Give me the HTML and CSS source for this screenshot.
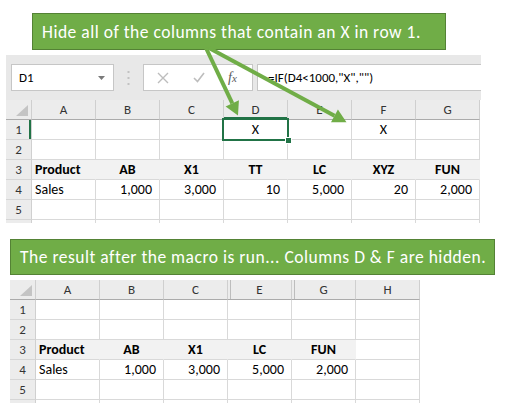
FILE: index.html
```html
<!DOCTYPE html>
<html>
<head>
<meta charset="utf-8">
<link rel="stylesheet" href="styles.css">
</head>
<body>
<div class="page">
  <div class="callout callout-top">Hide all of the columns that contain an X in row 1.</div>

  <div class="sheet sheet-top">
    <div class="fbar">
      <div class="namebox">
        <span>D1</span>
        <svg class="caret" width="7" height="4" viewBox="0 0 7 4"><polygon points="0,0 7,0 3.5,4" fill="#7a7a7a"/></svg>
      </div>
      <div class="grip">
        <svg width="3" height="14" viewBox="0 0 3 14"><rect x="0.5" y="0" width="2" height="2" fill="#c2c2c2"/><rect x="0.5" y="6" width="2" height="2" fill="#c2c2c2"/><rect x="0.5" y="12" width="2" height="2" fill="#c2c2c2"/></svg>
      </div>
      <div class="fxbox">
        <svg class="ico" width="12" height="12" viewBox="0 0 12 12"><path d="M1 1 L11 11 M11 1 L1 11" stroke="#bdbdbd" stroke-width="1.4" fill="none"/></svg>
        <svg class="ico" width="12" height="11" viewBox="0 0 12 11"><path d="M1 6 L4.5 9.5 L11 1" stroke="#bdbdbd" stroke-width="1.6" fill="none"/></svg>
        <span class="fx">f<span class="fxx">x</span></span>
      </div>
      <div class="formula">=IF(D4&lt;1000,"X","")</div>
    </div>

    <div class="grid grid-top">
      <div class="hd corner"><svg width="12" height="11" viewBox="0 0 12 11"><polygon points="12,0 12,11 0,11" fill="#c4c4c4"/></svg></div>
      <div class="hd">A</div><div class="hd">B</div><div class="hd">C</div><div class="hd hd-sel">D</div><div class="hd">E</div><div class="hd">F</div><div class="hd">G</div>

      <div class="rh rh-sel">1</div>
      <div class="c"></div><div class="c"></div><div class="c"></div>
      <div class="c ctr active">X<div class="sel"><div class="handle"></div></div></div>
      <div class="c"></div><div class="c ctr">X</div><div class="c"></div>

      <div class="rh">2</div>
      <div class="c"></div><div class="c"></div><div class="c"></div><div class="c"></div><div class="c"></div><div class="c"></div><div class="c"></div>

      <div class="rh">3</div>
      <div class="c f bold">Product</div><div class="c f bold ctr">AB</div><div class="c f bold ctr">X1</div><div class="c f bold ctr">TT</div><div class="c f bold ctr">LC</div><div class="c f bold ctr">XYZ</div><div class="c f bold ctr">FUN</div>

      <div class="rh">4</div>
      <div class="c">Sales</div><div class="c r">1,000</div><div class="c r">3,000</div><div class="c r">10</div><div class="c r">5,000</div><div class="c r">20</div><div class="c r">2,000</div>

      <div class="rh">5</div>
      <div class="c"></div><div class="c"></div><div class="c"></div><div class="c"></div><div class="c"></div><div class="c"></div><div class="c"></div>

      <div class="rh part"></div>
      <div class="c part"></div><div class="c part"></div><div class="c part"></div><div class="c part"></div><div class="c part"></div><div class="c part"></div><div class="c part"></div>
    </div>
  </div>

  <div class="callout callout-bottom">The result after the macro is run... Columns D &amp; F are hidden.</div>

  <div class="sheet sheet-bottom">
    <div class="grid grid-bottom">
      <div class="hd corner"><svg width="12" height="11" viewBox="0 0 12 11"><polygon points="12,0 12,11 0,11" fill="#c4c4c4"/></svg></div>
      <div class="hd">A</div><div class="hd">B</div><div class="hd">C</div><div class="hd hidden-left">E</div><div class="hd hidden-left">G</div><div class="hd">H</div>

      <div class="rh">1</div>
      <div class="c"></div><div class="c"></div><div class="c"></div><div class="c"></div><div class="c"></div><div class="c"></div>

      <div class="rh">2</div>
      <div class="c"></div><div class="c"></div><div class="c"></div><div class="c"></div><div class="c"></div><div class="c"></div>

      <div class="rh">3</div>
      <div class="c f bold">Product</div><div class="c f bold ctr">AB</div><div class="c f bold ctr">X1</div><div class="c f bold ctr">LC</div><div class="c f bold ctr">FUN</div><div class="c"></div>

      <div class="rh">4</div>
      <div class="c">Sales</div><div class="c r">1,000</div><div class="c r">3,000</div><div class="c r">5,000</div><div class="c r">2,000</div><div class="c"></div>

      <div class="rh">5</div>
      <div class="c"></div><div class="c"></div><div class="c"></div><div class="c"></div><div class="c"></div><div class="c"></div>

      <div class="rh part"></div>
      <div class="c part"></div><div class="c part"></div><div class="c part"></div><div class="c part"></div><div class="c part"></div><div class="c part"></div>
    </div>
  </div>

  <svg class="arrows" width="505" height="408" viewBox="0 0 505 408">
    <g fill="#70ad47" stroke="none">
      <line x1="206" y1="48" x2="232.3" y2="103.3" stroke="#70ad47" stroke-width="4"/>
      <polygon points="225.6,106.4 238.9,100.2 238,115.5"/>
      <line x1="209" y1="48" x2="334.5" y2="115.8" stroke="#70ad47" stroke-width="4"/>
      <polygon points="331,122.2 337.9,109.5 346.5,122.3"/>
    </g>
  </svg>
</div>
</body>
</html>
```

FILE: styles.css
```css
* { box-sizing: border-box; }

html, body {
  margin: 0;
  padding: 0;
  background: #ffffff;
}

body {
  width: 505px;
  height: 408px;
  overflow: hidden;
  font-family: Carlito, Calibri, Lato, "Liberation Sans", sans-serif;
  color: #000;
}

.page {
  position: relative;
  width: 505px;
  height: 408px;
  padding-top: 13px;
}

/* green callouts */
.callout {
  background: #70ad47;
  border: 1px solid #548235;
  color: #ffffff;
  font-size: 17.5px;
  letter-spacing: 0.5px;
  display: flex;
  align-items: center;
  padding-left: 9px;
  white-space: nowrap;
}

.callout-top {
  margin-left: 32px;
  width: 414px;
  height: 37px;
}

.callout-bottom {
  margin-left: 10px;
  margin-top: 16px;
  width: 485px;
  height: 36px;
}

/* sheets */
.sheet-top {
  margin-top: 5px;
  margin-left: 6px;
  width: 475px;
}

.sheet-bottom {
  margin-top: 5px;
  margin-left: 10px;
  width: 410px;
}

/* formula bar */
.fbar {
  height: 45px;
  background: #e8e8e8;
  display: flex;
  align-items: flex-start;
  padding: 9px 0 0 5px;
}

.namebox {
  width: 103px;
  height: 27px;
  background: #fff;
  border: 1px solid #c6c6c6;
  display: flex;
  align-items: center;
  justify-content: space-between;
  padding: 0 8px 0 7px;
  font-size: 13px;
}

.grip {
  width: 29px;
  height: 27px;
  display: flex;
  align-items: center;
  justify-content: center;
  padding-right: 1px;
}

.fxbox {
  width: 110px;
  height: 27px;
  background: #fff;
  border: 1px solid #c6c6c6;
  display: flex;
  align-items: center;
  padding-left: 13px;
  gap: 24px;
}

.fx {
  font-family: "Liberation Serif", "DejaVu Serif", serif;
  font-style: italic;
  font-size: 14px;
  color: #5a5a5a;
  margin-left: -1px;
}

.fxx {
  font-size: 11px;
}

.formula {
  flex: 1;
  height: 27px;
  margin-left: 4px;
  background: #fff;
  border: 1px solid #c6c6c6;
  border-right: none;
  font-size: 13px;
  line-height: 25px;
  padding-left: 10px;
  white-space: nowrap;
}

/* grids */
.grid {
  display: grid;
}

.grid-top {
  grid-template-columns: 26px repeat(7, 64px);
  grid-template-rows: 20px repeat(5, 20px) 3px;
}

.grid-bottom {
  grid-template-columns: 26px repeat(6, 64px);
  grid-template-rows: 20px repeat(5, 20px) 3px;
}

.hd {
  background: #ececec;
  border-right: 1px solid #cfcfcf;
  border-bottom: 1px solid #ababab;
  color: #333;
  font-size: 13px;
  line-height: 19px;
  text-align: center;
}

.corner {
  display: flex;
  align-items: flex-end;
  justify-content: flex-end;
  padding: 0 3px 3px 0;
}

.hd-sel {
  box-shadow: inset 0 -2px 0 #217346;
}

.hidden-left {
  box-shadow: inset 2px 0 0 #ececec, inset 3px 0 0 #bdbdbd;
}

.rh {
  background: #ececec;
  border-right: 1px solid #d0d0d0;
  border-bottom: 1px solid #d6d6d6;
  color: #333;
  font-size: 13px;
  line-height: 19px;
  text-align: center;
}

.rh-sel {
  box-shadow: inset -2px 0 0 #217346;
}

.c {
  border-right: 1px solid #d9d9d9;
  border-bottom: 1px solid #d9d9d9;
  font-size: 14px;
  line-height: 19px;
  padding: 0 3px;
  white-space: nowrap;
}

.part {
  border-bottom: none;
}

.ctr { text-align: center; }
.r { text-align: right; padding-right: 7px; }
.bold { font-weight: 700; }

.f {
  background: #f2f2f2;
  border-right-color: #f2f2f2;
}

.active {
  position: relative;
}

.sel {
  position: absolute;
  left: -2px;
  top: -2px;
  right: -2px;
  bottom: -2px;
  border: 2px solid #217346;
}

.handle {
  position: absolute;
  right: -5px;
  bottom: -5px;
  width: 7px;
  height: 7px;
  background: #217346;
  border: 1px solid #fff;
}

.arrows {
  position: absolute;
  left: 0;
  top: 0;
  pointer-events: none;
}
```
